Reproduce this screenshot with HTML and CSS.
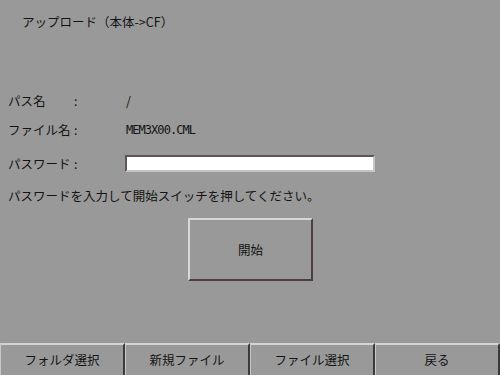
FILE: index.html
```html
<!DOCTYPE html>
<html lang="ja">
<head>
<meta charset="utf-8">
<link rel="stylesheet" href="styles.css">
</head>
<body>
<div class="screen">
  <div class="title">アップロード（本体-&gt;CF）</div>
  <div class="row row-path">
    <span class="label">パス名</span><span class="colon">:</span><span class="value">/</span>
  </div>
  <div class="row row-file">
    <span class="label">ファイル名</span><span class="colon">:</span><span class="value mono">MEM3X00.CML</span>
  </div>
  <div class="row row-pass">
    <span class="label">パスワード</span><span class="colon">:</span><span class="field"></span>
  </div>
  <div class="note">パスワードを入力して開始スイッチを押してください。</div>
  <div class="start-wrap"><div class="start">開始</div></div>
  <div class="toolbar">
    <div class="tbtn">フォルダ選択</div>
    <div class="tbtn">新規ファイル</div>
    <div class="tbtn">ファイル選択</div>
    <div class="tbtn">戻る</div>
  </div>
</div>
</body>
</html>
```
FILE: styles.css
```css
html, body {
  margin: 0;
  padding: 0;
}
body {
  background: #999999;
  font-family: "Noto Sans CJK JP", "Noto Sans", sans-serif;
  font-size: 12.5px;
  color: #141414;
}
.screen {
  width: 500px;
  height: 375px;
  display: flex;
  flex-direction: column;
  overflow: hidden;
}
.title {
  margin: 14px 0 0 22px;
  height: 16px;
  line-height: 16px;
}
.row {
  display: grid;
  grid-template-columns: 66px 51px 1fr;
  align-items: center;
  padding-left: 8px;
  height: 20px;
  line-height: 16px;
}
.row-path { margin-top: 61px; }
.row-file { margin-top: 9px; }
.row-pass { margin-top: 15px; height: 17px; }
.value {
  padding-left: 1px;
}
.mono {
  font-family: "DejaVu Sans Mono", "Liberation Mono", monospace;
  font-size: 12px;
  letter-spacing: -0.95px;
}
.field {
  width: 246px;
  height: 13px;
  background: #ffffff;
  border-top: 2px solid #5e5656;
  border-left: 2px solid #5e5656;
  border-right: 2px solid #c4c4c4;
  border-bottom: 2px solid #c4c4c4;
}
.note {
  margin: 16px 0 0 8px;
  height: 16px;
  line-height: 16px;
}
.start-wrap {
  margin-top: 14px;
  padding-left: 188px;
}
.start {
  width: 121px;
  height: 59px;
  display: flex;
  align-items: center;
  justify-content: center;
  border-top: 2px solid #d6d6d6;
  border-left: 2px solid #d6d6d6;
  border-right: 2px solid #4a4040;
  border-bottom: 2px solid #4a4040;
}
.toolbar {
  margin-top: auto;
  height: 32px;
  display: grid;
  grid-template-columns: repeat(4, 1fr);
}
.tbtn {
  display: flex;
  align-items: center;
  justify-content: center;
  border-top: 2px solid #d4d4d4;
  border-left: 1px solid #c8c8c8;
  border-right: 2px solid #3a3a3a;
  padding-bottom: 2px;
}
```
